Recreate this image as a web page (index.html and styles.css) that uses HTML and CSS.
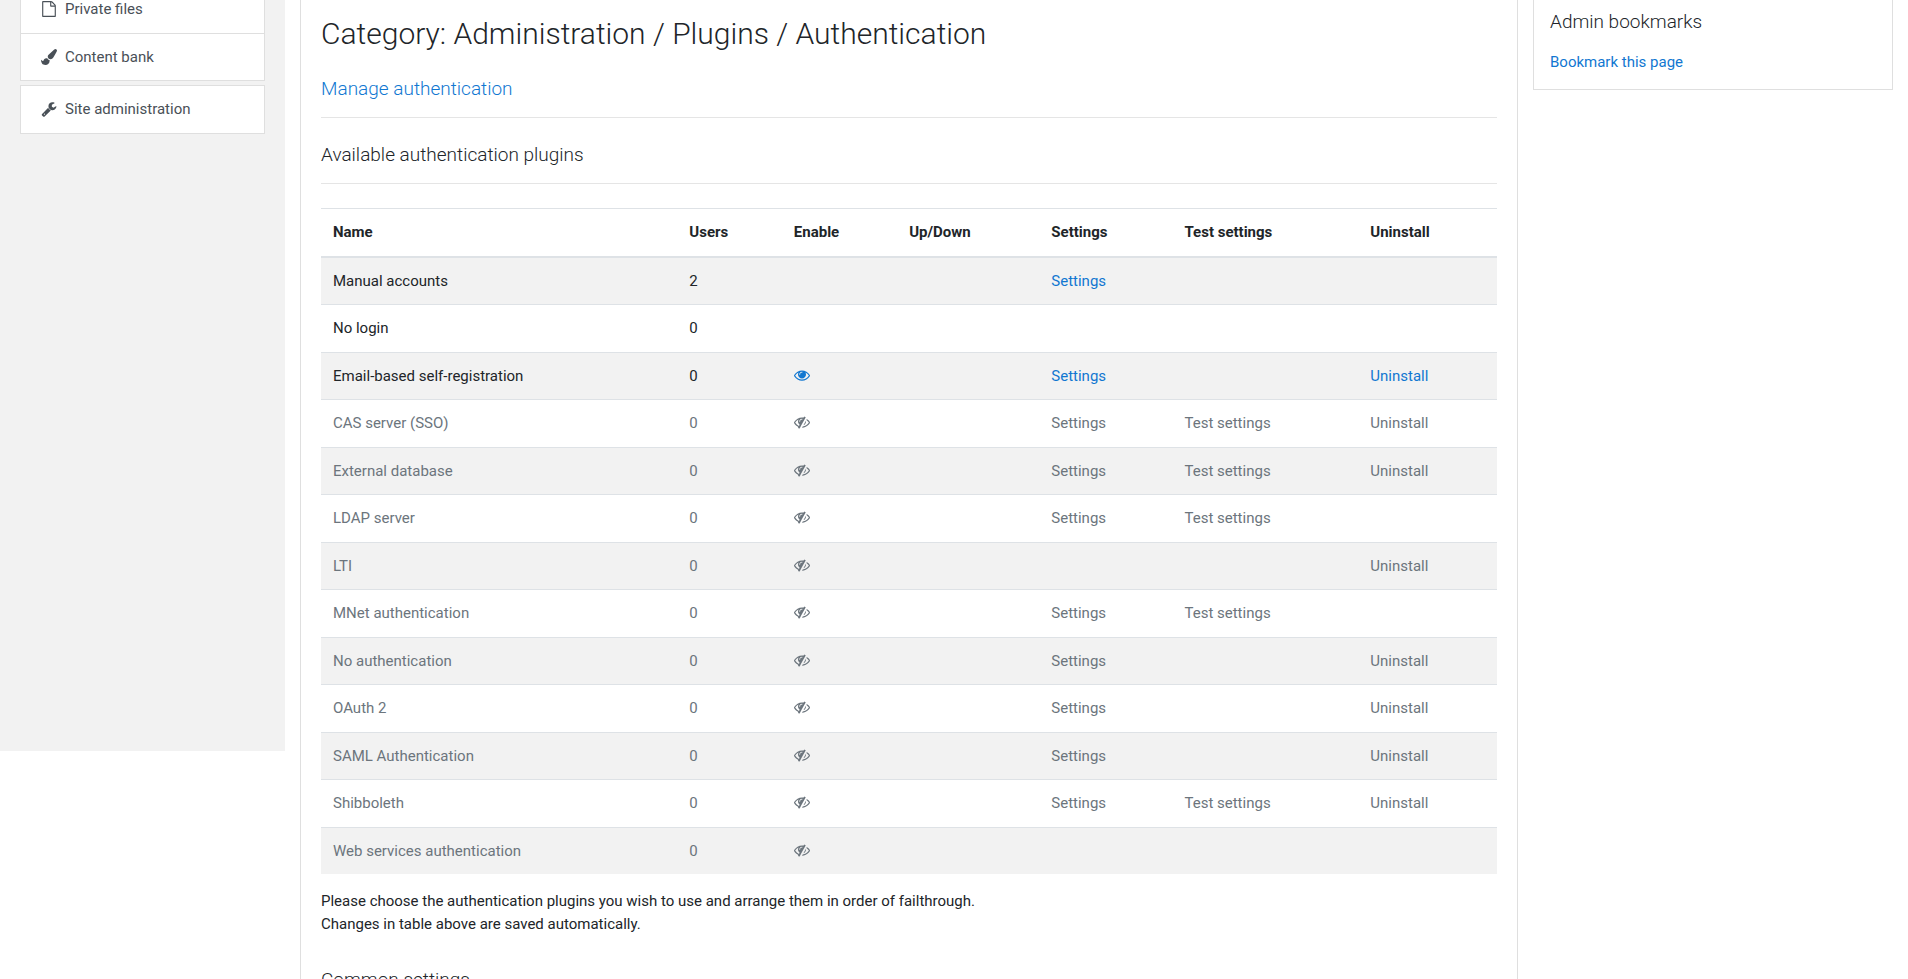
FILE: index.html
```html
<!DOCTYPE html>
<html lang="en">
<head>
<meta charset="utf-8">
<title>Manage authentication</title>
<link rel="stylesheet" href="styles.css">
</head>
<body>
<svg class="sprite" aria-hidden="true">
  <symbol id="file" viewBox="-128 0 1792 1792"><path d="M1468 380q28 28 48 76t20 88v1152q0 40-28 68t-68 28H96q-40 0-68-28t-28-68V96q0-40 28-68T96 0h896q40 0 88 20t76 48zm-444-244v376h376q-10-29-22-41l-313-313q-12-12-41-22zm384 1528V640H992q-40 0-68-28t-28-68V128H128v1536h1280z"/></symbol>
  <symbol id="brush" viewBox="0 0 1792 1792"><path d="M1615 0q70 0 122.500 46.500t52.500 116.500q0 63-45 151-332 629-465 752-97 91-218 91-126 0-216.500-92.500t-90.500-219.500q0-128 92-212l638-579q59-54 130-54zm-909 1034q39 76 106.500 130t150.500 76l1 71q4 213-129.500 347t-348.500 134q-123 0-218-46.500t-152.500-127.500-86.500-183-29-220q7 5 41 30t62 44.500 59 36.500 46 17q41 0 55-37 25-66 57.500-112.500t69.500-76 88-47.500 103-25.500 125-10.500z"/></symbol>
  <symbol id="wrench" viewBox="0 0 1792 1792"><path d="M448 1472q0-26-19-45t-45-19-45 19-19 45 19 45 45 19 45-19 19-45zm644-420l-682 682q-37 37-90 37-52 0-91-37l-106-108q-38-36-38-90 0-53 38-91l681-681q39 98 114.500 173.500t173.500 114.500zm634-435q0 39-23 106-47 134-164.500 217.500t-258.500 83.500q-185 0-316.500-131.500t-131.500-316.500 131.500-316.500 316.500-131.500q58 0 121.500 16.500t107.500 46.500q16 11 16 28t-16 28l-293 169v224l193 107q5-3 79-48.500t135.500-81 70.500-35.500q15 0 23.500 10t8.500 25z"/></symbol>
  <symbol id="eye" viewBox="0 0 1792 1792"><path d="M1664 960q-152-236-381-353 61 104 61 225 0 185-131.500 316.500t-316.500 131.500-316.500-131.500-131.500-316.500q0-121 61-225-229 117-381 353 133 205 333.500 326.500t434.500 121.500 434.500-121.500 333.500-326.500zm-720-384q0-20-14-34t-34-14q-125 0-214.500 89.500t-89.500 214.500q0 20 14 34t34 14 34-14 14-34q0-86 61-147t147-61q20 0 34-14t14-34zm848 384q0 34-20 69-140 230-376.500 368.500t-499.500 138.500-499.500-139-376.500-368q-20-35-20-69t20-69q140-229 376.500-368t499.500-139 499.500 139 376.500 368q20 35 20 69z"/></symbol>
  <symbol id="eye-slash" viewBox="0 0 1792 1792"><path d="M555 1335l78-141q-87-63-136-159t-49-203q0-121 61-225-229 117-381 353 167 258 427 375zm389-759q0-20-14-34t-34-14q-125 0-214.500 89.500t-89.500 214.500q0 20 14 34t34 14 34-14 14-34q0-86 61-147t147-61q20 0 34-14t14-34zm363-191q0 7-1 9-106 189-316 567t-315 566l-49 89q-10 16-28 16-12 0-134-70-16-10-16-28 0-12 44-87-143-65-263.500-173t-208.500-245q-20-31-20-69t20-69q153-235 380-371t496-136q89 0 180 17l54-97q10-16 28-16 5 0 18 6t31 15.500 33 18.500 31.500 18.500 19.500 11.500q16 10 16 27zm37 447q0 139-79 253.500t-209 164.500l280-502q8 45 8 84zm448 128q0 35-20 69-39 64-109 145-150 172-347.500 267t-419.500 95l74-132q212-18 392.500-137t301.500-307q-115-179-282-294l63-112q95 64 182.500 153t144.500 184q20 34 20 69z"/></symbol>
</svg>
<div class="page">
  <nav class="drawer" aria-label="Site">
    <div class="nav-group">
      <a class="nav-item" href="#"><svg class="icon"><use href="#file"/></svg>Private files</a>
      <a class="nav-item" href="#"><svg class="icon"><use href="#brush"/></svg>Content bank</a>
    </div>
    <div class="nav-group">
      <a class="nav-item" href="#"><svg class="icon"><use href="#wrench"/></svg>Site administration</a>
    </div>
  </nav>
  <main class="content">
    <h1 class="title">Category: Administration / Plugins / Authentication</h1>
    <h2 class="heading"><a href="#">Manage authentication</a></h2>
    <hr class="rule">
    <h2 class="heading">Available authentication plugins</h2>
    <hr class="rule">
    <table class="plugins">
      <thead>
        <tr><th>Name</th><th>Users</th><th>Enable</th><th>Up/Down</th><th>Settings</th><th>Test settings</th><th>Uninstall</th></tr>
      </thead>
      <tbody>
        <tr><td>Manual accounts</td><td>2</td><td></td><td></td><td><a href="#">Settings</a></td><td></td><td></td></tr>
        <tr><td>No login</td><td>0</td><td></td><td></td><td></td><td></td><td></td></tr>
        <tr><td>Email-based self-registration</td><td>0</td><td><a href="#" aria-label="Disable"><svg class="icon"><use href="#eye"/></svg></a></td><td></td><td><a href="#">Settings</a></td><td></td><td><a href="#">Uninstall</a></td></tr>
        <tr class="dimmed"><td>CAS server (SSO)</td><td>0</td><td><a href="#" aria-label="Enable"><svg class="icon"><use href="#eye-slash"/></svg></a></td><td></td><td><a href="#">Settings</a></td><td><a href="#">Test settings</a></td><td><a href="#">Uninstall</a></td></tr>
        <tr class="dimmed"><td>External database</td><td>0</td><td><a href="#" aria-label="Enable"><svg class="icon"><use href="#eye-slash"/></svg></a></td><td></td><td><a href="#">Settings</a></td><td><a href="#">Test settings</a></td><td><a href="#">Uninstall</a></td></tr>
        <tr class="dimmed"><td>LDAP server</td><td>0</td><td><a href="#" aria-label="Enable"><svg class="icon"><use href="#eye-slash"/></svg></a></td><td></td><td><a href="#">Settings</a></td><td><a href="#">Test settings</a></td><td></td></tr>
        <tr class="dimmed"><td>LTI</td><td>0</td><td><a href="#" aria-label="Enable"><svg class="icon"><use href="#eye-slash"/></svg></a></td><td></td><td></td><td></td><td><a href="#">Uninstall</a></td></tr>
        <tr class="dimmed"><td>MNet authentication</td><td>0</td><td><a href="#" aria-label="Enable"><svg class="icon"><use href="#eye-slash"/></svg></a></td><td></td><td><a href="#">Settings</a></td><td><a href="#">Test settings</a></td><td></td></tr>
        <tr class="dimmed"><td>No authentication</td><td>0</td><td><a href="#" aria-label="Enable"><svg class="icon"><use href="#eye-slash"/></svg></a></td><td></td><td><a href="#">Settings</a></td><td></td><td><a href="#">Uninstall</a></td></tr>
        <tr class="dimmed"><td>OAuth 2</td><td>0</td><td><a href="#" aria-label="Enable"><svg class="icon"><use href="#eye-slash"/></svg></a></td><td></td><td><a href="#">Settings</a></td><td></td><td><a href="#">Uninstall</a></td></tr>
        <tr class="dimmed"><td>SAML Authentication</td><td>0</td><td><a href="#" aria-label="Enable"><svg class="icon"><use href="#eye-slash"/></svg></a></td><td></td><td><a href="#">Settings</a></td><td></td><td><a href="#">Uninstall</a></td></tr>
        <tr class="dimmed"><td>Shibboleth</td><td>0</td><td><a href="#" aria-label="Enable"><svg class="icon"><use href="#eye-slash"/></svg></a></td><td></td><td><a href="#">Settings</a></td><td><a href="#">Test settings</a></td><td><a href="#">Uninstall</a></td></tr>
        <tr class="dimmed"><td>Web services authentication</td><td>0</td><td><a href="#" aria-label="Enable"><svg class="icon"><use href="#eye-slash"/></svg></a></td><td></td><td></td><td></td><td></td></tr>
      </tbody>
    </table>
    <p class="note">Please choose the authentication plugins you wish to use and arrange them in order of failthrough.<br>Changes in table above are saved automatically.</p>
    <h2 class="heading">Common settings</h2>
  </main>
  <aside class="blocks">
    <section class="block">
      <h2 class="block-title">Admin bookmarks</h2>
      <a href="#">Bookmark this page</a>
    </section>
  </aside>
</div>
</body>
</html>
```
FILE: styles.css
```css
* { box-sizing: border-box; }

body {
  margin: 0;
  background: #fff;
  color: #212529;
  font: 400 15px/1.5 Roboto, "Liberation Sans", sans-serif;
}

a { color: #1177d1; text-decoration: none; }

.sprite { display: none; }

.icon {
  flex: none;
  width: 16px;
  height: 16px;
  fill: currentColor;
}

.page {
  display: flex;
  align-items: flex-start;
  gap: 15px;
  height: 100vh;
  padding-right: 15px;
  overflow: hidden;
}

.drawer {
  flex: 0 0 285px;
  height: calc(100% - 228px);
  padding: 0 20px;
  background: #f2f2f2;
}

.nav-group {
  margin-bottom: 4px;
  border: 1px solid #dfdfdf;
  background: #fff;
}

.nav-group:first-child { margin-top: -15px; }

.nav-item {
  display: flex;
  align-items: center;
  gap: 8px;
  padding: 12px 20px;
  color: #495057;
}

.nav-item + .nav-item { border-top: 1px solid #dfdfdf; }

.content {
  flex: 1;
  min-width: 0;
  min-height: 100%;
  padding: 16px 20px 0;
  border: solid #dfdfdf;
  border-width: 0 1px;
}

.title {
  margin: 0 0 25px;
  font-size: 30px;
  font-weight: 300;
  line-height: 36px;
}

.heading {
  margin: 0;
  font-size: 19px;
  font-weight: 300;
  line-height: 24px;
}

.rule {
  height: 1px;
  margin: 16px 0 25px;
  border: 0;
  background: #e5e5e5;
}

.rule + .plugins { margin-top: -1px; }

.plugins {
  width: 100%;
  border-collapse: collapse;
}

.plugins th,
.plugins td {
  padding: 12px;
  border-top: 1px solid #dee2e6;
  text-align: left;
  vertical-align: top;
}

.plugins thead th {
  border-bottom: 2px solid #dee2e6;
  font-weight: 700;
  vertical-align: bottom;
}

.plugins tbody tr:nth-child(odd) { background: #f2f2f2; }

.plugins .icon { vertical-align: -2px; }

.dimmed,
.dimmed a { color: #6c757d; }

.note { margin: 16px 0 33px; }

.blocks { flex: 0 0 360px; }

.block {
  padding: 10px 16px 15px;
  border: 1px solid #dfdfdf;
  border-top: 0;
}

.block-title {
  margin: 0 0 17px;
  font-size: 19px;
  font-weight: 300;
  line-height: 24px;
}
```
